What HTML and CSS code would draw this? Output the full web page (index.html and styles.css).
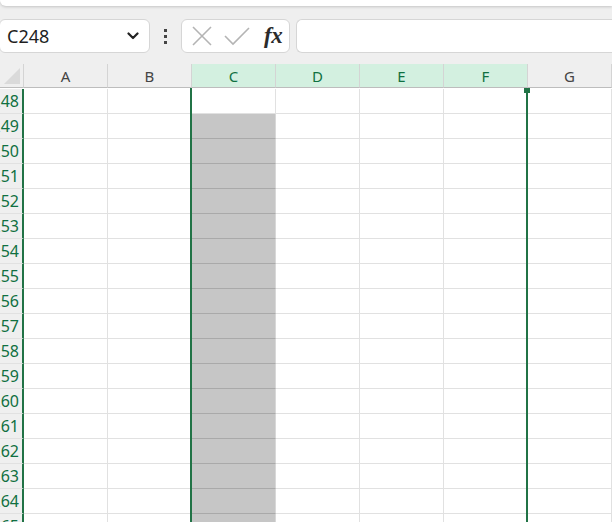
FILE: index.html
```html
<!DOCTYPE html>
<html lang="en">
<head>
    <meta charset="UTF-8">
    <title>Sheet</title>
    <link rel="stylesheet" href="styles.css">
</head>
<body>
    <div class="ribbon-edge"></div>

    <!-- Formula bar -->
    <div class="formula-bar">
        <div class="name-box">
            <span class="name-text">C248</span>
            <svg class="chevron" width="12" height="8" viewBox="0 0 12 8">
                <path d="M1.5 1.5 L6 6 L10.5 1.5" fill="none" stroke="#222" stroke-width="2.2" stroke-linecap="round" stroke-linejoin="round"/>
            </svg>
        </div>
        <div class="grip"><i></i><i></i><i></i></div>
        <div class="fx-buttons">
            <svg width="20" height="20" viewBox="0 0 20 20">
                <path d="M1 1 L19 19 M19 1 L1 19" stroke="#b4b4b4" stroke-width="1.6"/>
            </svg>
            <svg width="26" height="20" viewBox="0 0 26 20">
                <path d="M1 10 L9 18 L25 2" fill="none" stroke="#b4b4b4" stroke-width="1.6"/>
            </svg>
            <span class="fx">fx</span>
        </div>
        <div class="formula-input"></div>
    </div>

    <!-- Grid -->
    <div class="sheet">
        <div class="grid" id="grid">
            <div class="corner"><span class="corner-tri"></span></div>
        </div>
        <div class="selection"><span class="fill-handle"></span></div>
    </div>

    <script>
        const cols = ["A", "B", "C", "D", "E", "F", "G"];
        const selectedCols = ["C", "D", "E", "F"];
        const grid = document.getElementById("grid");

        cols.forEach(function (c) {
            const h = document.createElement("div");
            h.className = "col-head" + (selectedCols.includes(c) ? " selected" : "");
            h.innerText = c;
            grid.appendChild(h);
        });

        for (let r = 248; r <= 265; r++) {
            const rh = document.createElement("div");
            rh.className = "row-head";
            rh.innerHTML = "<span>" + r + "</span>";
            grid.appendChild(rh);
            cols.forEach(function (c) {
                const cell = document.createElement("div");
                cell.className = "cell";
                if (c === "C" && r > 248) cell.className += " shaded";
                grid.appendChild(cell);
            });
        }
    </script>
</body>
</html>
```

FILE: styles.css
```css
* {
    box-sizing: border-box;
    margin: 0;
    padding: 0;
}

body {
    width: 612px;
    height: 522px;
    overflow: hidden;
    background-color: #efefef;
    font-family: "Segoe UI", "Noto Sans", Arial, sans-serif;
    color: #222;
}

.ribbon-edge {
    height: 6px;
    background-color: #fff;
    border-bottom-left-radius: 6px;
    box-shadow: 0 1px 3px rgba(0, 0, 0, 0.18);
}

.formula-bar {
    display: flex;
    align-items: center;
    height: 58px;
    padding: 13px 0 11px 0;
}

.name-box {
    display: flex;
    align-items: center;
    justify-content: space-between;
    width: 151px;
    height: 34px;
    margin-left: -1px;
    padding: 0 10px 0 7px;
    background-color: #fff;
    border: 1px solid #d6d6d6;
    border-radius: 6px;
}

.name-text {
    font-size: 18px;
    color: #1f1f1f;
}

.grip {
    display: flex;
    flex-direction: column;
    gap: 3px;
    width: 31px;
    align-items: center;
}

.grip i {
    display: block;
    width: 3px;
    height: 3px;
    background-color: #444;
}

.fx-buttons {
    display: flex;
    align-items: center;
    width: 109px;
    height: 34px;
    padding: 0 6px 0 10px;
    gap: 12px;
    background-color: #fff;
    border: 1px solid #d6d6d6;
    border-radius: 6px;
}

.fx {
    font-family: "Liberation Serif", "DejaVu Serif", serif;
    font-style: italic;
    font-weight: bold;
    font-size: 23px;
    color: #2b2b2b;
    margin-left: 2px;
    letter-spacing: -0.5px;
}

.formula-input {
    flex: 1;
    height: 34px;
    margin-left: 6px;
    background-color: #fff;
    border: 1px solid #d6d6d6;
    border-right: none;
    border-radius: 6px 0 0 6px;
}

.sheet {
    position: relative;
    height: 458px;
    overflow: hidden;
}

.grid {
    display: grid;
    grid-template-columns: 24px repeat(7, 84px);
    grid-auto-rows: 25px;
    background-color: #fff;
}

.corner {
    position: relative;
    height: 24px;
    background-color: #efefef;
    border-right: 1px solid #d4d4d4;
    border-bottom: 1px solid #bdbdbd;
}

.corner-tri {
    position: absolute;
    right: 3px;
    bottom: 3px;
    width: 0;
    height: 0;
    border-left: 16px solid transparent;
    border-bottom: 16px solid #dadada;
}

.col-head {
    height: 24px;
    display: flex;
    align-items: center;
    justify-content: center;
    font-size: 15px;
    color: #444;
    background-color: #efefef;
    border-right: 1px solid #d4d4d4;
    border-bottom: 1px solid #bdbdbd;
}

.col-head.selected {
    background-color: #d3f0e0;
    color: #107041;
}

.row-head {
    display: flex;
    align-items: center;
    justify-content: flex-end;
    overflow: hidden;
    padding-right: 3px;
    background-color: #efefef;
    border-right: 2px solid #217346;
    border-bottom: 1px solid #e1e1e1;
    font-size: 16px;
    color: #107041;
}

.row-head span {
    white-space: nowrap;
}

.cell {
    border-right: 1px solid #e1e1e1;
    border-bottom: 1px solid #e1e1e1;
}

.cell.shaded {
    background-color: #c6c6c6;
    border-bottom-color: #a9a9a9;
    border-right-color: #d8d8d8;
}

.selection {
    position: absolute;
    left: 190px;
    top: 24px;
    width: 338px;
    height: 434px;
    border-left: 2px solid #217346;
    border-right: 2px solid #217346;
    pointer-events: none;
}

.fill-handle {
    position: absolute;
    right: -5px;
    top: 0;
    width: 8px;
    height: 5px;
    background-color: #217346;
    border-left: 1px solid #fff;
    border-right: 1px solid #fff;
}
```
